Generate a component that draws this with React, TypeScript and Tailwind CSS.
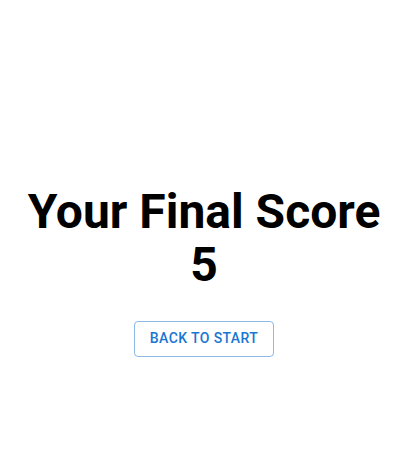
export default function App() {
  return (
    <div className="flex h-[459px] w-full flex-col items-center bg-white pr-[2px] pt-[186px] font-['Roboto',sans-serif]">
      <h1 className="text-center text-[48px] font-bold leading-[1.1] text-black">
        Your Final Score
        <br />5
      </h1>
      <button className="mt-[29px] h-[36px] rounded-[4px] border border-[#1976d2]/50 px-[15px] text-[14px] font-medium uppercase tracking-[0.4px] text-[#1976d2]">
        Back to Start
      </button>
    </div>
  )
}
